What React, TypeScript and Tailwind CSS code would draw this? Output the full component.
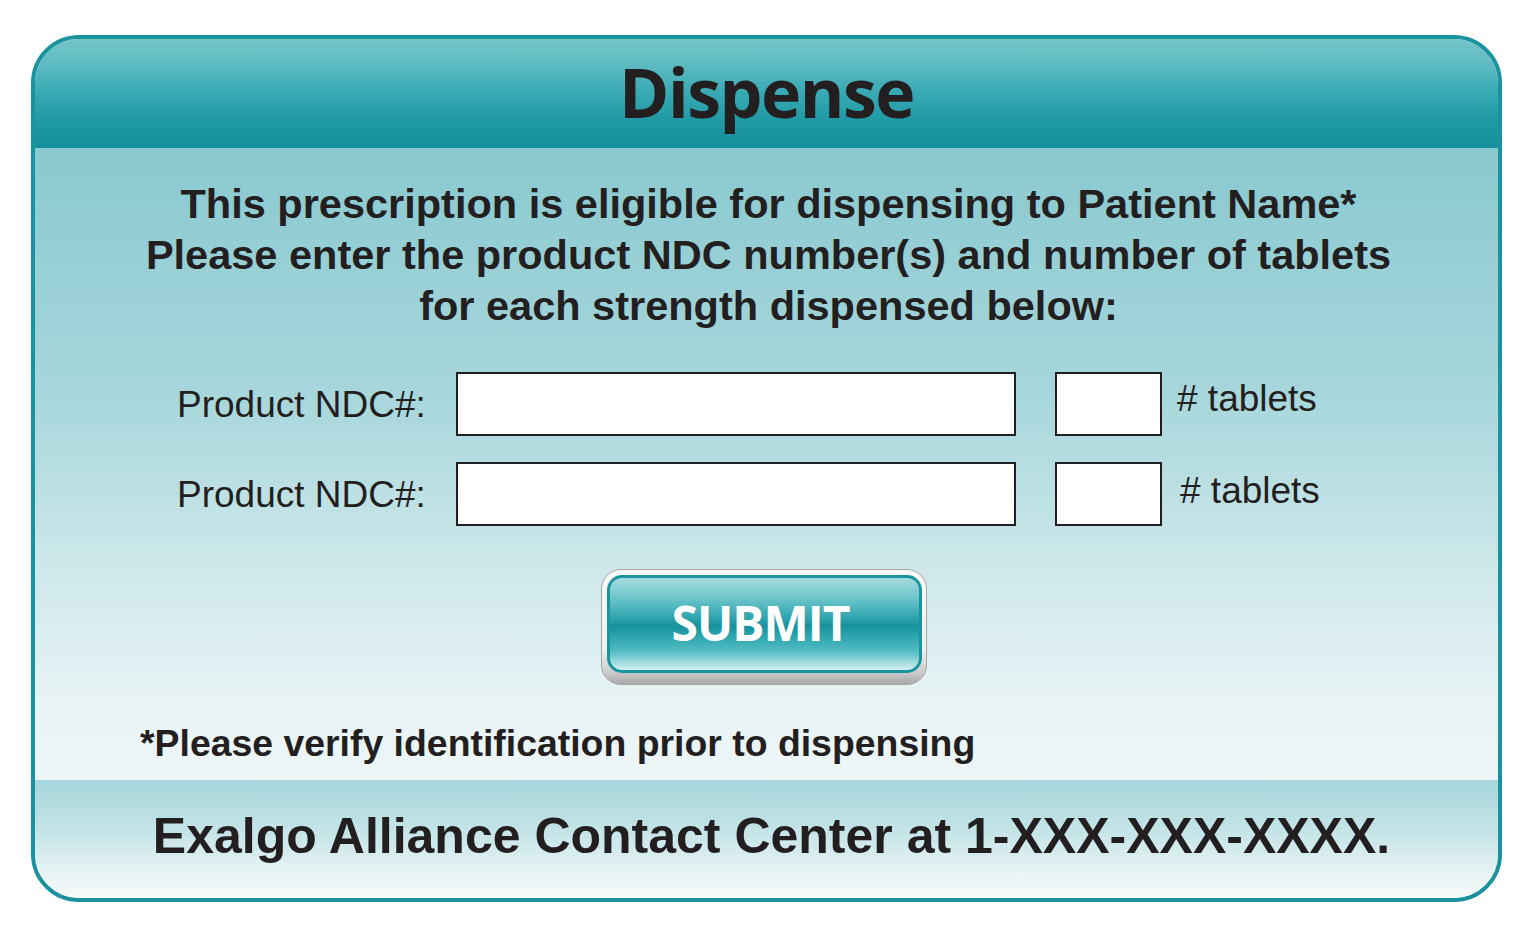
import React from "react";

const arial = { fontFamily: '"Liberation Sans", Arial, sans-serif' };
const humanist = { fontFamily: '"Open Sans", "Noto Sans", sans-serif' };

function Row({ second }: { second?: boolean }) {
  return (
    <div className="flex items-center h-[64px]">
      <div className="text-[37px] leading-none text-[#231f20] w-[279px] shrink-0" style={arial}>
        Product NDC#:
      </div>
      <div className="w-[560px] h-[64px] bg-white border-2 border-[#231f20] shrink-0" />
      <div className="w-[107px] h-[64px] bg-white border-2 border-[#231f20] ml-[39px] shrink-0" />
      <div
        className={
          second
            ? "text-[37px] leading-none text-[#231f20] ml-[18px] mt-[-8px]"
            : "text-[37px] leading-none text-[#231f20] ml-[15px] mt-[-12px]"
        }
        style={arial}
      >
        # tablets
      </div>
    </div>
  );
}

export default function App() {
  return (
    <div className="w-[1524px] h-[936px] bg-white pt-[35px] pl-[31px]">
      <div className="w-[1471px] h-[867px] rounded-[48px] border-4 border-[#1b939e] overflow-hidden flex flex-col">
        <div className="h-[109px] shrink-0 flex items-center justify-center bg-[linear-gradient(to_bottom,#74c6cb_0%,#62bdc3_20%,#37a9b3_50%,#1f99a4_75%,#15909b_100%)]">
          <div
            className="text-[68px] font-bold leading-none text-[#231f20] tracking-[-1.5px] mt-[-4px]"
            style={humanist}
          >
            Dispense
          </div>
        </div>
        <div className="flex-1 flex flex-col bg-[linear-gradient(to_bottom,#89c9d0_0%,#a8d7dc_40%,#d0e9ec_68%,#e8f3f5_88%,#eef6f7_100%)]">
          <div
            className="pt-[30px] pl-[4px] text-center text-[41.5px] leading-[51px] font-bold text-[#231f20]"
            style={arial}
          >
            <div>This prescription is eligible for dispensing to Patient Name*</div>
            <div>Please enter the product NDC number(s) and number of tablets</div>
            <div>for each strength dispensed below:</div>
          </div>
          <div className="pl-[142px] mt-[41px] flex flex-col gap-[26px]">
            <Row />
            <Row second />
          </div>
          <div className="flex justify-center mt-[43px] pr-[5px]">
            <div className="w-[326px] h-[116px] rounded-[20px] border border-[#a4a4a4] bg-[linear-gradient(to_bottom,#fafafa_0%,#f0f0f0_70%,#d0d0d0_88%,#a9a9a9_100%)] pt-[5px] pl-[5px] pr-[4px] pb-[11px]">
              <div className="w-full h-full rounded-[15px] border-[3px] border-[#1a95a0] bg-[linear-gradient(to_bottom,#a5dbdf_0%,#6cc5cb_22%,#27a0aa_46%,#17919c_52%,#24a0aa_60%,#55bcc4_80%,#d4f0f2_100%)] flex items-center justify-center">
                <div
                  className="text-white font-bold text-[48px] leading-none tracking-[-1px] mt-[-2px] mr-[8px]"
                  style={humanist}
                >
                  SUBMIT
                </div>
              </div>
            </div>
          </div>
          <div
            className="mt-[40px] pl-[105px] text-[37.4px] leading-none font-bold text-[#231f20]"
            style={arial}
          >
            *Please verify identification prior to dispensing
          </div>
        </div>
        <div className="h-[118px] shrink-0 flex items-center justify-center bg-[linear-gradient(to_bottom,#a5d6db_0%,#c6e5e8_45%,#e9f4f5_80%,#f7fafb_100%)]">
          <div
            className="text-[50px] leading-none font-bold text-[#231f20] ml-[10px] mt-[-6px]"
            style={arial}
          >
            Exalgo Alliance Contact Center at 1-XXX-XXX-XXXX.
          </div>
        </div>
      </div>
    </div>
  );
}
